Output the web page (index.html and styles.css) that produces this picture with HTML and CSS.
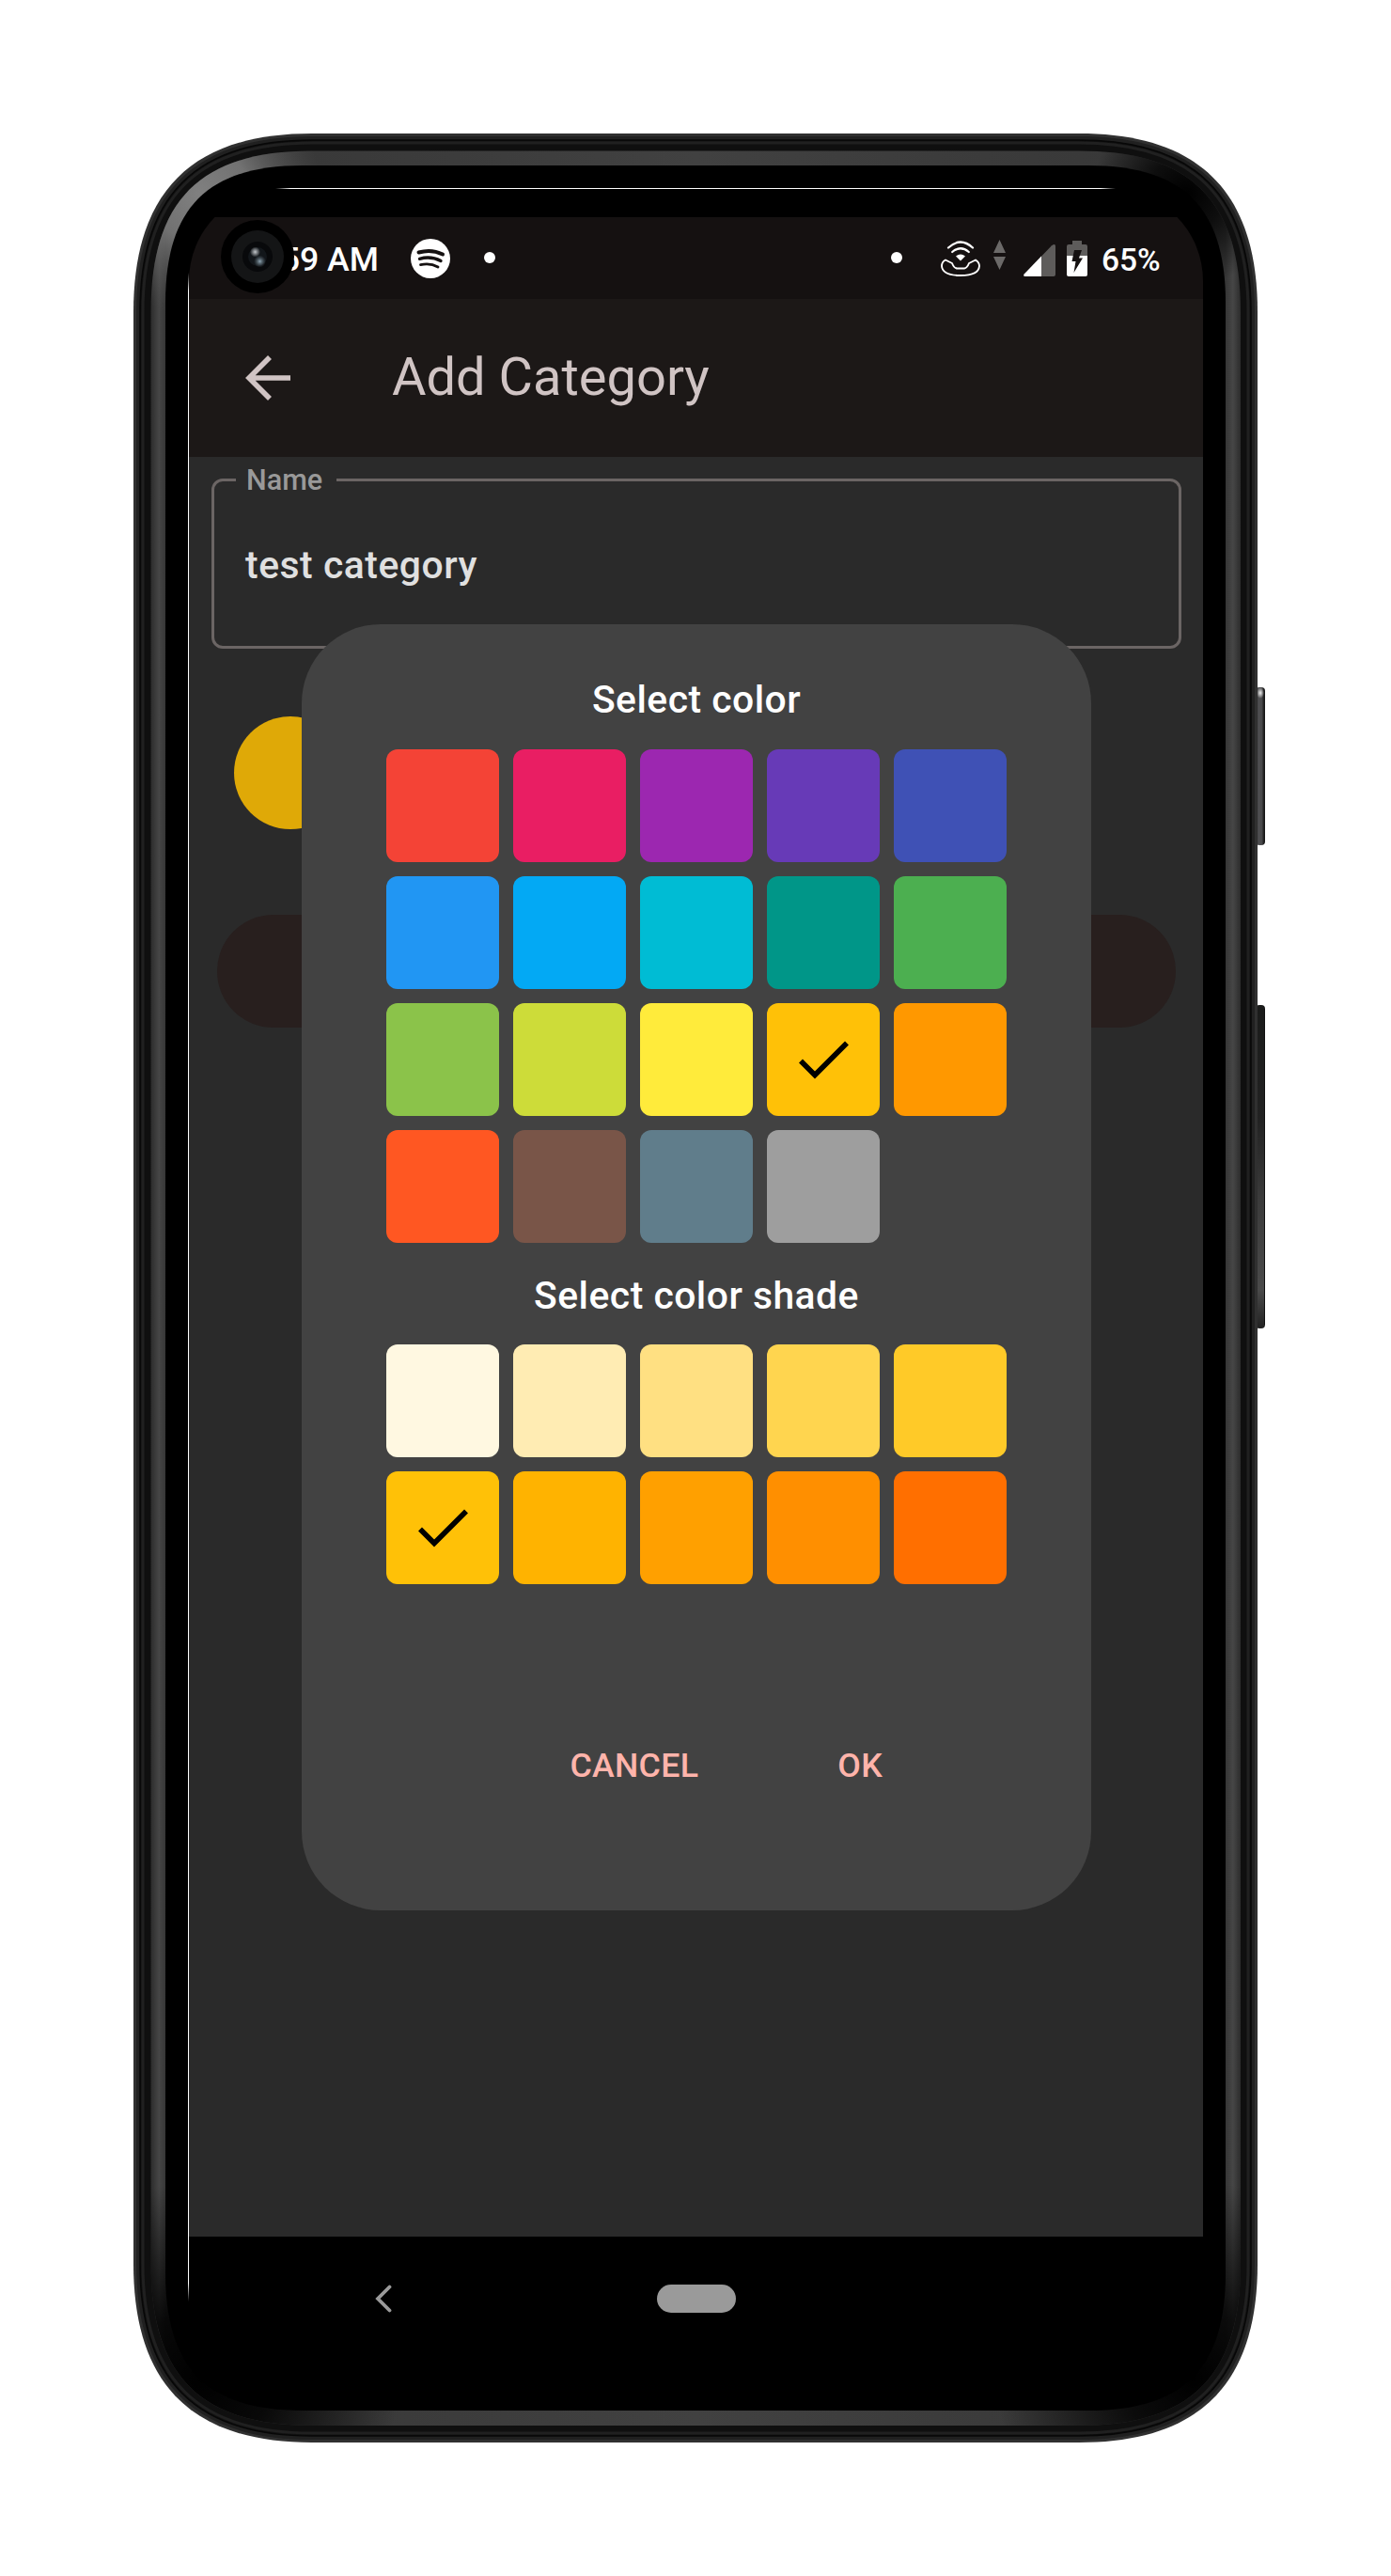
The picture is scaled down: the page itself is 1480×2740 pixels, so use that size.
FILE: index.html
```html
<!DOCTYPE html>
<html lang="en">
<head>
<meta charset="utf-8">
<title>Add Category</title>
<link rel="stylesheet" href="styles.css">
</head>
<body>
<div class="phone">
  <svg class="shell" width="1204" height="2456" viewBox="142 142 1204 2456" aria-hidden="true">
    <defs>
      <linearGradient id="key" x1="0" x2="1" y1="0" y2="0"><stop offset="0" stop-color="#222"/><stop offset=".3" stop-color="#505052"/><stop offset=".65" stop-color="#48484a"/><stop offset=".85" stop-color="#222"/><stop offset="1" stop-color="#111"/></linearGradient>
      <linearGradient id="rocker" x1="0" x2="0" y1="0" y2="1"><stop offset="0" stop-color="#1a1b1a"/><stop offset=".35" stop-color="#222"/><stop offset=".6" stop-color="#3b3b3b"/><stop offset=".88" stop-color="#4a4a4a"/><stop offset="1" stop-color="#222"/></linearGradient>
      <radialGradient id="glint"><stop offset="0" stop-color="#eee"/><stop offset="1" stop-color="#eee" stop-opacity="0"/></radialGradient>
      <radialGradient id="light" gradientUnits="userSpaceOnUse" cx="212" cy="205" r="130"><stop offset="0" stop-color="#808080"/><stop offset=".4" stop-color="#7c7c7c" stop-opacity=".85"/><stop offset="1" stop-color="#555" stop-opacity="0"/></radialGradient>
      <radialGradient id="darkTR" gradientUnits="userSpaceOnUse" cx="1262" cy="206" r="100"><stop offset="0" stop-color="#000"/><stop offset=".4" stop-color="#000" stop-opacity=".75"/><stop offset="1" stop-color="#000" stop-opacity="0"/></radialGradient>
      <radialGradient id="darkBL" gradientUnits="userSpaceOnUse" cx="215" cy="2530" r="210"><stop offset="0" stop-color="#000"/><stop offset=".35" stop-color="#000" stop-opacity=".85"/><stop offset="1" stop-color="#000" stop-opacity="0"/></radialGradient>
      <radialGradient id="darkBR" gradientUnits="userSpaceOnUse" cx="1270" cy="2530" r="210"><stop offset="0" stop-color="#000"/><stop offset=".35" stop-color="#000" stop-opacity=".8"/><stop offset="1" stop-color="#000" stop-opacity="0"/></radialGradient>
      <linearGradient id="bandX" x1="0" x2="1" y1="0" y2="0"><stop offset="0" stop-color="#2c2c2c"/><stop offset=".0075" stop-color="#464646"/><stop offset=".0139" stop-color="#363636"/><stop offset=".5" stop-color="#414141"/><stop offset=".9861" stop-color="#363636"/><stop offset=".993" stop-color="#464646"/><stop offset="1" stop-color="#2c2c2c"/></linearGradient>
      <linearGradient id="edgeX" gradientUnits="userSpaceOnUse" x1="293" x2="1187" y1="0" y2="0"><stop offset="0" stop-color="#fff" stop-opacity="0"/><stop offset=".018" stop-color="#fff"/><stop offset=".982" stop-color="#fff"/><stop offset="1" stop-color="#fff" stop-opacity="0"/></linearGradient>
      <linearGradient id="edgeY" gradientUnits="userSpaceOnUse" x1="0" x2="0" y1="290" y2="2448"><stop offset="0" stop-color="#fff" stop-opacity="0"/><stop offset=".009" stop-color="#fff"/><stop offset=".991" stop-color="#fff"/><stop offset="1" stop-color="#fff" stop-opacity="0"/></linearGradient>
      <path id="band" d="M160.500 332C160.500 213 213 160.500 332 160.500H1148C1267 160.500 1320 213 1320 332V2408C1320 2527 1267 2580 1148 2580H332C213 2580 160.500 2527 160.500 2408Z"/>
    </defs>
    <rect x="1336" y="731" width="10" height="168" rx="4" fill="url(#key)"/>
    <ellipse cx="1341" cy="737" rx="4" ry="6" fill="url(#glint)"/>
    <rect x="1336" y="1069" width="10" height="344" rx="4" fill="url(#rocker)"/>
    <path d="M1345.500 1073V1409" stroke="#111"/>
    <path d="M142 332C142 204 204 142 332 142H1148C1276 142 1338 204 1338 332V2408C1338 2536 1276 2598 1148 2598H332C204 2598 142 2536 142 2408Z" fill="#303030"/>
    <path d="M145 332C145 206 206 145 332 145H1148C1274 145 1335 206 1335 332V2408C1335 2534 1274 2595 1148 2595H332C206 2595 145 2534 145 2408Z" fill="#202020"/>
    <path d="M149 332C149 208 208 149 332 149H1148C1272 149 1331 208 1331 332V2408C1331 2532 1272 2591 1148 2591H332C208 2591 149 2532 149 2408Z" fill="#121212" stroke="#070707" stroke-width="1.500"/>
    <path d="M152 332C152 210 210 152 332 152H1148C1270 152 1328 210 1328 332V2408C1328 2530 1270 2588 1148 2588H332C210 2588 152 2530 152 2408Z" fill="#0f0f0f" stroke="#202020" stroke-width="3"/>
    <use href="#band" fill="url(#bandX)"/>
    <use href="#band" fill="url(#light)"/>
    <use href="#band" fill="url(#darkTR)"/>
    <use href="#band" fill="url(#darkBL)"/>
    <use href="#band" fill="url(#darkBR)"/>
    <path d="M176 322C176 221 221 176 322 176H1158C1259 176 1304 221 1304 322V2418C1304 2519 1259 2564 1158 2564H322C221 2564 176 2519 176 2418Z" fill="#000"/>
    <rect x="293" y="200" width="894" height="1" fill="url(#edgeX)"/>
    <rect x="200" y="290" width="1" height="2158" fill="url(#edgeY)"/>
  </svg>

  <div class="screen">
    <header class="status">
      <span class="clock">7:59 AM</span>
      <svg class="spotify" width="42" height="42" viewBox="0 0 42 42"><circle cx="21" cy="21" r="21" fill="#fff"/><g fill="none" stroke="#151111" stroke-linecap="round"><path d="M8.500 14.500Q22 10.500 34 16.500" stroke-width="4"/><path d="M9.500 21.300Q21.500 18 32 23.500" stroke-width="3.400"/><path d="M10.500 27.700Q20.500 25.300 29 30" stroke-width="2.800"/></g></svg>
      <i class="dot"></i>
      <i class="dot dot-right"></i>
      <svg class="call" width="42" height="38" viewBox="0 0 42 38" fill="none" stroke="#fff" stroke-width="1.900" stroke-linecap="round" stroke-linejoin="round"><path d="M8 7.500Q21-4.500 34 7.500" stroke-width="2.200"/><path d="M12.200 12Q21 4.500 29.800 12" stroke-width="2.200"/><path d="M16 16.500Q21 12.500 26 16.500L21 21.500Z" fill="#fff" stroke="none"/><path d="M5 20.500L12 24Q14 29 17 29.500H25Q28 29 30 24L37 20.500Q41 23 41 27C40.500 34 32 37 21 37S1.500 34 1 27Q1 22.500 5 20.500Z"/></svg>
      <svg class="data" width="13" height="32" viewBox="0 0 13 32" fill="#6b6968"><path d="M6.500 0L13 14H0ZM0 18H13L6.500 32Z"/></svg>
      <svg class="signal" width="34" height="34" viewBox="0 0 34 34"><path d="M30 1.200Q34-1.500 34 2V32Q34 34 32 34H2Q-1 34 1 31.200Z" fill="#5e5c5b"/><path d="M19 12.500V34H2Q-1 34 1 31.200Z" fill="#fff"/></svg>
      <svg class="battery" width="22" height="38" viewBox="0 0 22 38"><path d="M6 0H16V4H20Q22 4 22 6V16H0V6Q0 4 2 4H6Z" fill="#5e5c5b"/><path d="M0 16H22V36Q22 38 20 38H2Q0 38 0 36Z" fill="#fff"/><path d="M8 10H16L13 18.500H17L7.500 34L9.500 22H5.500Z" fill="#151111"/></svg>
      <span class="percent">65%</span>
      <svg class="camera" width="78" height="78" viewBox="0 0 78 78"><defs><radialGradient id="g1"><stop offset="0" stop-color="#c4c8cc"/><stop offset="1" stop-color="#c4c8cc" stop-opacity="0"/></radialGradient><radialGradient id="g2"><stop offset="0" stop-color="#8fa6b4"/><stop offset="1" stop-color="#59666f" stop-opacity="0"/></radialGradient></defs><circle cx="39" cy="39" r="39"/><circle cx="39" cy="39" r="28" fill="#141516"/><circle cx="39" cy="39" r="16" fill="#08090b"/><circle cx="39" cy="39" r="10" fill="#12161a"/><circle cx="36.500" cy="34" r="5.500" fill="url(#g1)"/><circle cx="41.500" cy="44" r="6.500" fill="url(#g2)"/></svg>
    </header>
    <div class="appbar">
      <svg width="48" height="48" viewBox="0 0 48 48" fill="none" stroke="#d0c4c4" stroke-width="5.600"><path d="M48 24H4M26 2L4 24L26 46"/></svg>
      <h1>Add Category</h1>
    </div>
    <main class="body">
      <fieldset class="field"><legend>Name</legend><span>test category</span></fieldset>
      <div class="chosen"></div>
      <div class="submit"></div>
      <section class="dialog">
        <h2 class="first">Select color</h2>
        <div class="swatches">
          <i style="background:#f44336"></i><i style="background:#e91e63"></i><i style="background:#9c27b0"></i><i style="background:#673ab7"></i><i style="background:#3f51b5"></i>
          <i style="background:#2196f3"></i><i style="background:#03a9f4"></i><i style="background:#00bcd4"></i><i style="background:#009688"></i><i style="background:#4caf50"></i>
          <i style="background:#8bc34a"></i><i style="background:#cddc39"></i><i style="background:#ffeb3b"></i><i style="background:#ffc107"><svg width="54" height="42" viewBox="0 0 54 42"><path d="M3 22.500L18 37.500L52 3.500" fill="none" stroke="#000" stroke-width="5.600"/></svg></i><i style="background:#ff9800"></i>
          <i style="background:#ff5722"></i><i style="background:#795548"></i><i style="background:#607d8b"></i><i style="background:#9e9e9e"></i>
        </div>
        <h2 class="second">Select color shade</h2>
        <div class="swatches">
          <i style="background:#fff8e1"></i><i style="background:#ffecb3"></i><i style="background:#ffe082"></i><i style="background:#ffd54f"></i><i style="background:#ffca28"></i>
          <i style="background:#ffc107"><svg width="54" height="42" viewBox="0 0 54 42"><path d="M3 22.500L18 37.500L52 3.500" fill="none" stroke="#000" stroke-width="5.600"/></svg></i><i style="background:#ffb300"></i><i style="background:#ffa000"></i><i style="background:#ff8f00"></i><i style="background:#ff6f00"></i>
        </div>
        <div class="actions"><span>CANCEL</span><span>OK</span></div>
      </section>
    </main>
    <nav class="nav">
      <svg width="18" height="30" viewBox="0 0 18 30" fill="none" stroke="#9a9a9a" stroke-width="3.800" stroke-linecap="round"><path d="M15.500 2.500L3 15L15.500 27.500"/></svg>
      <i class="home"></i>
    </nav>
  </div>
</div>
</body>
</html>
```
FILE: styles.css
```css
* { box-sizing: border-box; }
body { margin: 0; background: #fff; font-family: Roboto, sans-serif; }
i { display: block; font-style: normal; }
svg { display: block; flex: none; }

.phone { position: relative; width: 1480px; height: 2740px; padding: 201px 200px 200px 201px; }
.shell { position: absolute; left: 142px; top: 142px; }

.screen { position: relative; width: 1079px; height: 2339px; padding-top: 30px; border-radius: 98px; overflow: hidden; background: #000; display: flex; flex-direction: column; }

.status { position: relative; height: 87px; background: #151111; color: #fff; display: flex; align-items: center; padding: 0 48px 0 55px; font-weight: 500; }
.clock { margin-top: 2px; font-size: 35.7px; width: 147px; text-align: right; white-space: nowrap; }
.spotify { margin-left: 34px; }
.dot { width: 12px; height: 12px; border-radius: 50%; background: #fff; margin: -1px 0 0 36px; }
.dot-right { margin-left: auto; }
.call { margin-left: 41px; }
.data { margin: -7px 0 0 14px; }
.signal { margin: 4px 0 0 19px; }
.battery { margin-left: 12px; }
.percent { font-size: 33.500px; margin: 3px 0 0 15px; width: 60px; white-space: nowrap; }
.camera { position: absolute; left: 34px; top: 3px; }

.appbar { height: 168px; background: #1c1817; color: #d0c4c4; display: flex; align-items: center; padding-left: 60px; }
.appbar h1 { margin: -2px 0 0 108px; font-size: 56px; font-weight: 400; line-height: 66px; }

.body { position: relative; height: 1893px; background: #2a2a2a; padding: 8px 23px 0 24px; }
.field { margin: 0; height: 196px; padding: 0 0 0 8px; border: 3px solid #6b6564; border-radius: 12px; color: #e0e0e0; }
.field legend { width: 107px; margin-left: 15px; padding: 0 11px; color: #999; font-size: 30.600px; line-height: 33px; font-weight: 500; }
.field span { display: block; padding: 50px 0 0 25px; font-size: 40.800px; line-height: 48px; font-weight: 500; letter-spacing: .55px; }
.chosen { width: 120px; height: 120px; margin: 72px 0 0 24px; border-radius: 50%; background: #dfa907; }
.submit { height: 120px; margin: 91px 6px 0; border-radius: 60px; background: #281f1e; }

.dialog { position: absolute; left: 120px; top: 178px; width: 840px; height: 1368px; padding: 0 90px; border-radius: 84px; background: #424242; }
.dialog h2 { margin: 0; color: #fff; font-size: 40.800px; line-height: 48px; font-weight: 500; letter-spacing: .5px; text-align: center; }
.dialog .first { padding: 55.500px 0 29px; }
.dialog .second { padding: 32.500px 0 28px; }
.swatches { display: grid; grid-template-columns: repeat(5, 120px); grid-auto-rows: 120px; gap: 15px; }
.swatches i { border-radius: 12px; display: grid; place-items: center; }
.actions { display: flex; justify-content: flex-end; gap: 148px; padding: 172px 132px 0 0; color: #ffb4ab; font-size: 35.700px; line-height: 42px; font-weight: 500; letter-spacing: .3px; }

.nav { height: 161px; display: flex; align-items: center; padding: 0 0 30px 198px; }
.home { width: 84px; height: 30px; margin-left: 282px; border-radius: 15px; background: #9a9a9a; }
```
